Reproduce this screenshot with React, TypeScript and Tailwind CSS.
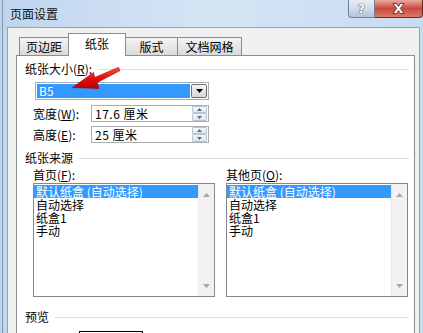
import React from 'react';

const ui = "font-['Noto_Sans_CJK_SC','Noto_Sans',sans-serif]";

function GroupHeader({ label, className = '' }: { label: React.ReactNode; className?: string }) {
  return (
    <div className={`shrink-0 flex items-center h-[12px] pl-[8px] pr-[5px] ${className}`}>
      <span className="leading-[12px] whitespace-nowrap">{label}</span>
      <div className="flex-1 ml-[6px] border-t border-[#d5dfe5]" />
    </div>
  );
}

function Spinner() {
  return (
    <div className="ml-auto w-[15px] h-full flex flex-col">
      <div className="h-[7px] border border-[#b9c5d3] rounded-[1px] bg-linear-to-b from-[#f7f9fc] to-[#e2e8f0] flex items-center justify-center">
        <svg width="5" height="3" viewBox="0 0 5 3"><path d="M0 3L2.5 0L5 3Z" fill="#55698c" /></svg>
      </div>
      <div className="h-[8px] border border-[#b9c5d3] rounded-[1px] bg-linear-to-b from-[#f1f4f8] to-[#dfe6ee] flex items-center justify-center">
        <svg width="5" height="3" viewBox="0 0 5 3"><path d="M0 0L2.5 3L5 0Z" fill="#55698c" /></svg>
      </div>
    </div>
  );
}

function SizeField({ label, letter, value }: { label: string; letter: string; value: string }) {
  return (
    <div className="flex items-center h-[17px]">
      <div className="ml-[16px] w-[58px] leading-[12px] whitespace-nowrap">
        {label}(<span className="underline">{letter}</span>):
      </div>
      <div className="w-[118px] h-[17px] border border-[#abadb3] bg-white flex items-center pl-[3px] pr-px">
        <span className="leading-[12px] whitespace-nowrap tracking-[0.5px]">{value}</span>
        <Spinner />
      </div>
    </div>
  );
}

function PaperList() {
  const items = ['默认纸盒 (自动选择)', '自动选择', '纸盒1', '手动'];
  return (
    <div className="w-[182px] h-[114px] border border-[#828790] bg-white flex">
      <div className="flex-1 pt-px">
        {items.map((t, i) => (
          <div
            key={t}
            className={`h-[13px] leading-[13px] pl-[2px] whitespace-nowrap ${i === 0 ? 'bg-[#3399ff] text-white' : ''}`}
          >
            {t}
          </div>
        ))}
      </div>
      <div className="w-[16px] bg-[#f2f2f2] border-l border-[#e8e8e8] flex flex-col justify-between items-center pt-[9px] pb-[8px]">
        <svg width="7" height="4" viewBox="0 0 7 4"><path d="M0 4L3.5 0L7 4Z" fill="#a8a8a8" /></svg>
        <svg width="7" height="4" viewBox="0 0 7 4"><path d="M0 0L3.5 4L7 0Z" fill="#a8a8a8" /></svg>
      </div>
    </div>
  );
}

export default function App() {
  return (
    <div className={`w-[423px] h-[333px] overflow-hidden relative bg-linear-to-r from-[#bfd5ee] via-[#d6e5f5] to-[#c7dbf1] text-[12px] text-black ${ui}`}>
      <div className="h-full ml-[2px] border-l border-[#8397ae] flex flex-col">
        {/* title bar */}
        <div className="h-[27px] shrink-0 flex items-start">
          <div className="ml-[7px] mt-[7px] leading-[14px] text-[#111]">页面设置</div>
          <div className="ml-auto flex">
            <div className="w-[27px] h-[18px] border border-t-0 border-[#6f8299] rounded-bl-[4px] bg-linear-to-b from-[#e6edf5] via-[#d0dcea] to-[#b4c4d7] flex items-center justify-center">
              <span className="font-['DejaVu_Sans',sans-serif] font-bold text-[12px] leading-[12px] text-white [text-shadow:0_0_1px_#333,0_0_1px_#333]">?</span>
            </div>
            <div className="w-[48px] h-[18px] border border-t-0 border-l-0 border-[#6e2a26] rounded-br-[4px] bg-linear-to-b from-[#e9a99f] via-[#c9473d] to-[#d97a6f] flex items-center justify-center">
              <svg width="13" height="11" viewBox="0 0 13 11">
                <path d="M1 0.5H4.5L6.5 3.4L8.5 0.5H12L8.3 5.5L12 10.5H8.5L6.5 7.6L4.5 10.5H1L4.7 5.5Z" fill="#fff" stroke="#4a2220" strokeWidth="0.8" />
              </svg>
            </div>
          </div>
        </div>

        {/* client area */}
        <div className="flex-1 min-h-0 ml-[4px] mr-[3px] border-l border-t border-r border-[#8fa4bc] bg-[#f0f0f0] flex flex-col pt-[5px]">
          {/* tabs */}
          <div className="h-[22px] shrink-0 flex items-end pl-[11px]">
            <div className="w-[49px] h-[18px] border-l border-t border-[#898c95] bg-linear-to-b from-[#f4f4f4] to-[#dadada] flex items-center justify-center leading-[12px]">页边距</div>
            <div className="relative z-10 w-[58px] h-[23px] -mb-px border-l border-t border-r border-[#898c95] bg-white flex items-center justify-center pb-[2px] leading-[12px]">纸张</div>
            <div className="w-[52px] h-[18px] border-t border-r border-[#898c95] bg-linear-to-b from-[#f4f4f4] to-[#dadada] flex items-center justify-center leading-[12px]">版式</div>
            <div className="w-[64px] h-[18px] border-t border-r border-[#898c95] bg-linear-to-b from-[#f4f4f4] to-[#dadada] flex items-center justify-center leading-[12px]">文档网格</div>
          </div>

          {/* tab panel */}
          <div className="shrink-0 ml-[8px] mr-[4px] border border-[#898c95] bg-white flex flex-col">
            <GroupHeader className="mt-[7px]" label={<>纸张大小(<span className="underline">R</span>):</>} />

            <div className="shrink-0 mt-[7px] ml-[18px] w-[174px] h-[18px] border border-[#a5abb3] bg-white flex p-px">
              <div className="flex-1 bg-[#3399ff] text-white leading-[14px] pl-[2px]">B5</div>
              <div className="w-[16px] ml-px border border-[#707070] rounded-[2px] bg-linear-to-b from-[#f4f4f4] to-[#d8d8d8] flex items-center justify-center">
                <svg width="7" height="4" viewBox="0 0 7 4"><path d="M0 0L3.5 4L7 0Z" fill="#000" /></svg>
              </div>
            </div>

            <div className="shrink-0 mt-[5px]">
              <SizeField label="宽度" letter="W" value="17.6 厘米" />
            </div>
            <div className="shrink-0 mt-[4px]">
              <SizeField label="高度" letter="E" value="25 厘米" />
            </div>

            <GroupHeader className="mt-[9px]" label="纸张来源" />

            <div className="shrink-0 mt-[5px] ml-[16px] flex gap-[11px]">
              <div className="flex flex-col">
                <div className="h-[12px] leading-[12px] mb-[2px]">首页(<span className="underline">F</span>):</div>
                <PaperList />
              </div>
              <div className="flex flex-col">
                <div className="h-[12px] leading-[12px] mb-[2px]">其他页(<span className="underline">O</span>):</div>
                <PaperList />
              </div>
            </div>

            <GroupHeader className="mt-[14px]" label="预览" />

            <div className="shrink-0 mt-[8px] ml-[62px] w-[64px] h-[60px] border border-black bg-white" />
          </div>
        </div>
      </div>

      {/* red annotation arrow */}
      <svg className="absolute left-[66px] top-[62px] pointer-events-none" width="60" height="32" viewBox="66 62 60 32">
        <defs>
          <linearGradient id="arrowRed" x1="0" y1="0" x2="0" y2="1">
            <stop offset="0" stopColor="#ff4a3a" />
            <stop offset="0.5" stopColor="#e8100a" />
            <stop offset="1" stopColor="#b50000" />
          </linearGradient>
        </defs>
        <path
          d="M72.5 87.5L93.5 72.5L94.6 77.6L118.4 67.4L120 70.6L97.2 82.6L99 88.5Z"
          fill="url(#arrowRed)"
          stroke="#a00000"
          strokeWidth="0.6"
          strokeLinejoin="round"
        />
      </svg>
    </div>
  );
}
